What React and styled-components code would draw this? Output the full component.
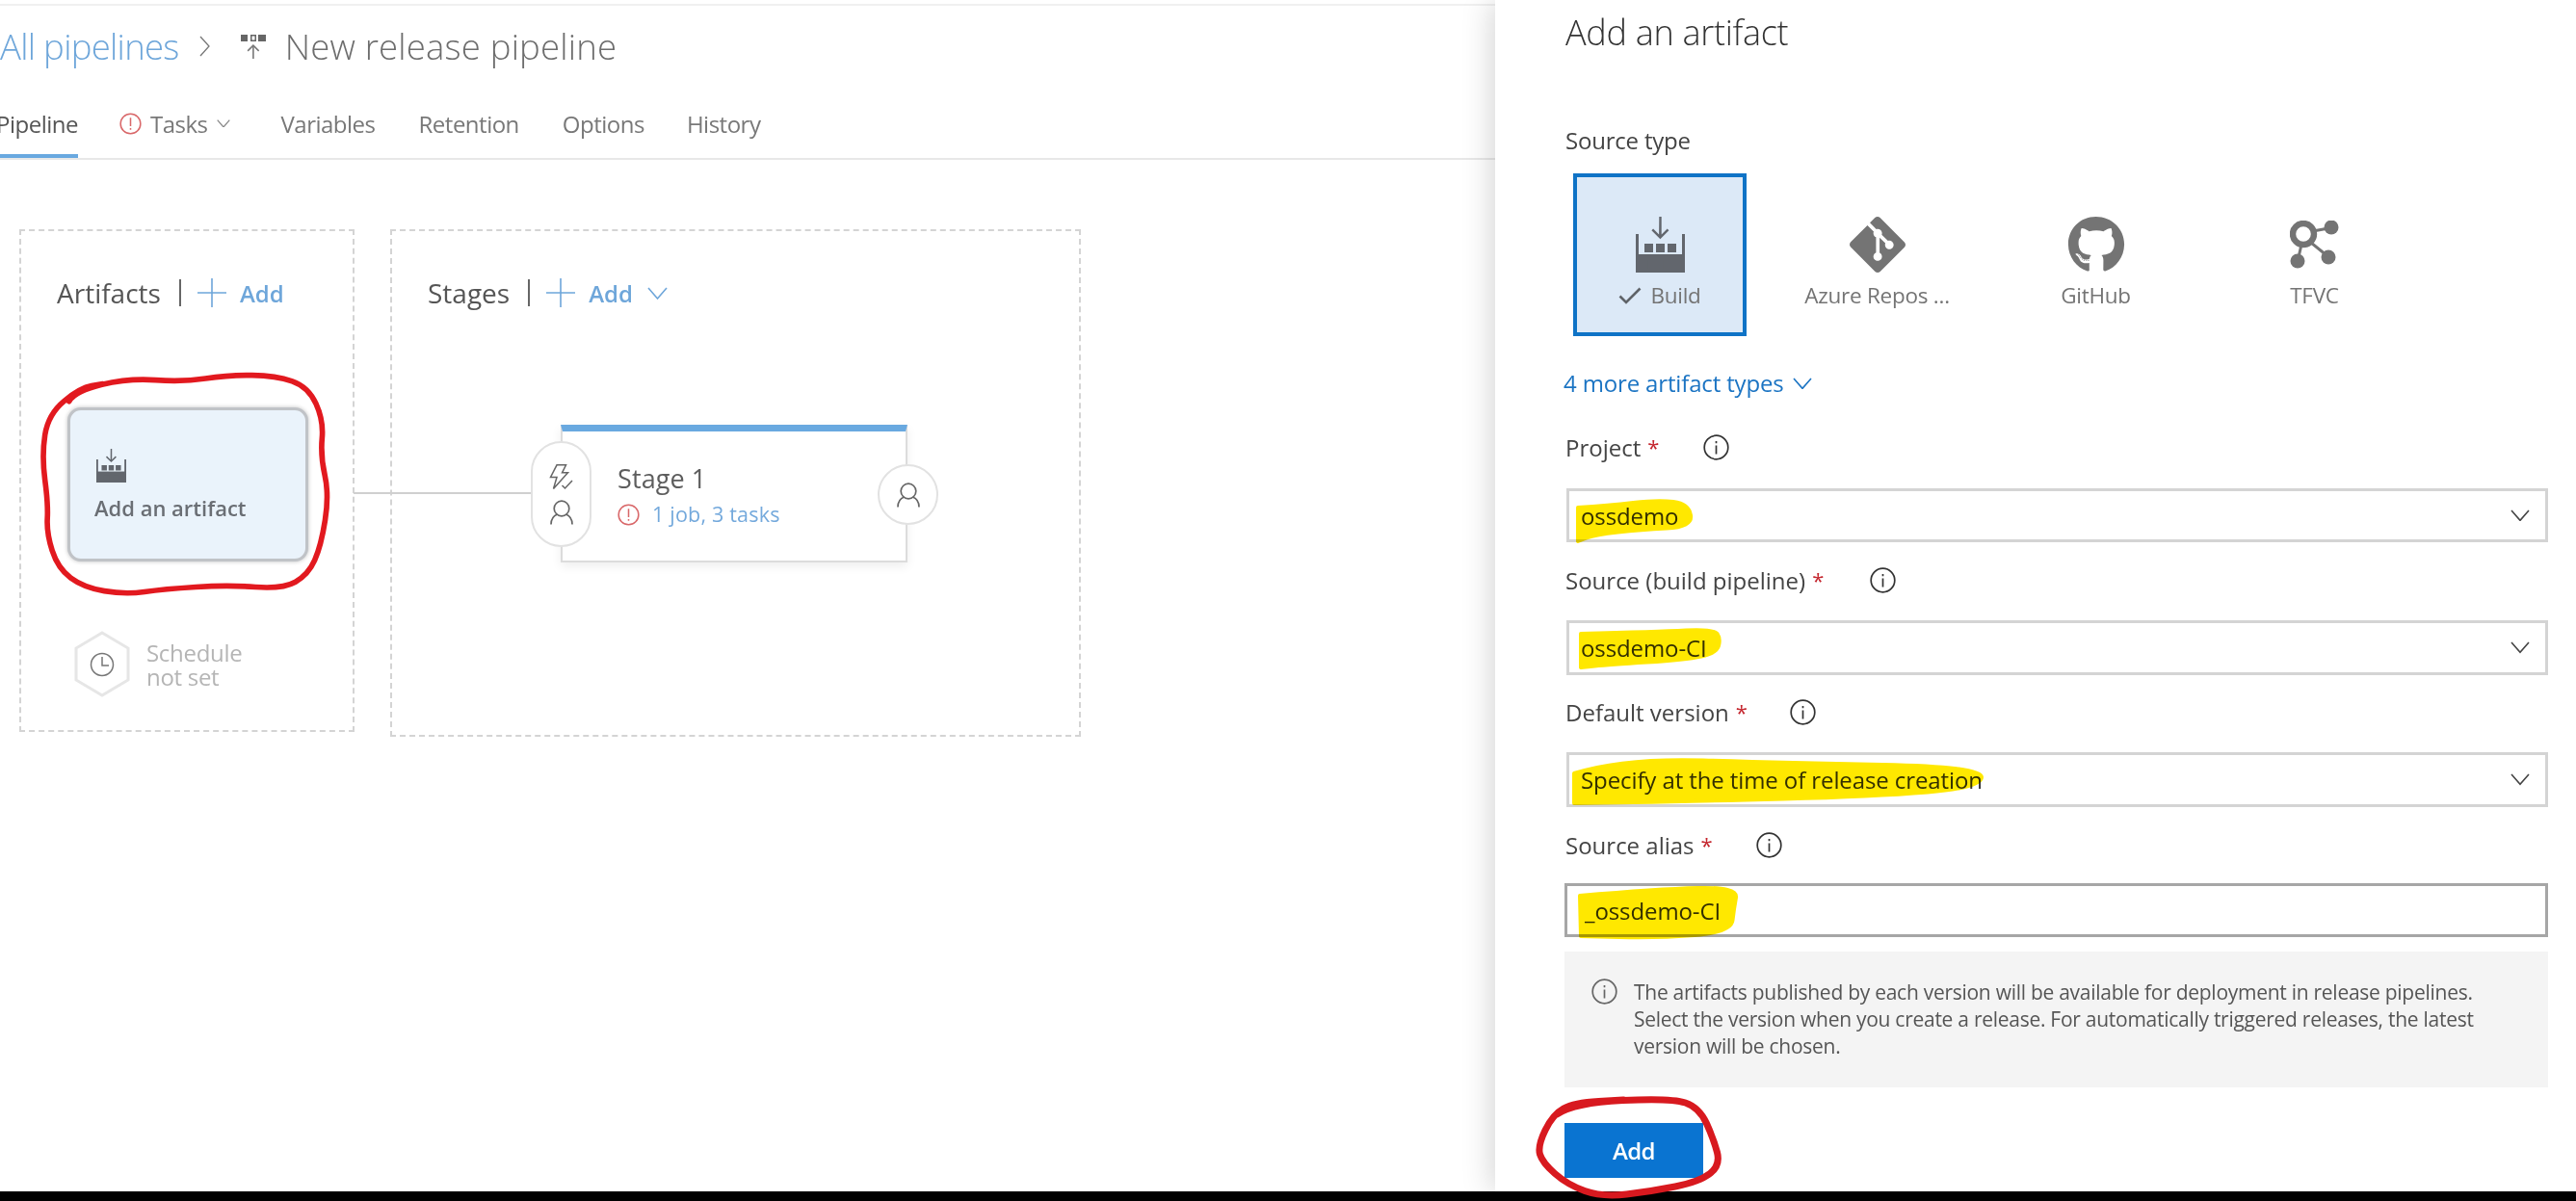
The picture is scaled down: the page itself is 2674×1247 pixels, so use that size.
import React from 'react';
import styled, { createGlobalStyle } from 'styled-components';
import { SiGit } from 'react-icons/si';
import { FaGithub } from 'react-icons/fa';

const GlobalStyle = createGlobalStyle`
  html, body { margin: 0; padding: 0; background: #fff; }
  body { font-family: "Open Sans", "Noto Sans", sans-serif; color: #555; }
  * { box-sizing: border-box; }
`;

// smooth closed/open outline through hand-picked points
function smooth(pts, closed) {
  let d = `M${pts[0][0]} ${pts[0][1]}`;
  for (let i = 1; i < pts.length - 1; i++) {
    const mx = (pts[i][0] + pts[i + 1][0]) / 2;
    const my = (pts[i][1] + pts[i + 1][1]) / 2;
    d += ` Q${pts[i][0]} ${pts[i][1]} ${mx} ${my}`;
  }
  const last = pts[pts.length - 1];
  d += ` L${last[0]} ${last[1]}`;
  return closed ? d + 'Z' : d;
}

const Page = styled.div`
  position: relative;
  width: 2674px;
  height: 1247px;
  overflow: hidden;
  display: flex;
  flex-direction: column;
`;
const Body = styled.div`
  display: flex;
  height: 1237px;
`;
const BlackBar = styled.div`
  height: 10px;
  background: #000;
`;
const Main = styled.main`
  width: 1552px;
  padding-top: 4px;
  overflow: hidden;
`;
const TopRule = styled.div`
  height: 2px;
  background: #f0f0f0;
`;
const TitleRow = styled.div`
  height: 84px;
  display: flex;
  align-items: center;
`;
const Crumb = styled.span`
  font-size: 36.5px;
  font-weight: 300;
  letter-spacing: -0.7px;
  color: #6ea6da;
`;
const PipelineName = styled.span`
  font-size: 36.5px;
  font-weight: 300;
  letter-spacing: 0.2px;
  color: #6d6d6d;
  margin-left: 20px;
`;
const CrumbSep = styled.svg`
  width: 11px;
  height: 22px;
  margin: 0 32px 0 21px;
`;
const Tabs = styled.nav`
  height: 76px;
  display: flex;
  align-items: flex-end;
  border-bottom: 2px solid #e8e8e8;
  margin-left: -4px;
`;
const Tab = styled.div`
  height: 50px;
  padding-bottom: 18px;
  display: flex;
  align-items: center;
  gap: 9px;
  margin-right: ${p => p.$gap}px;
  font-size: 24px;
  letter-spacing: -0.5px;
  color: ${p => (p.$active ? '#555' : '#787878')};
  border-bottom: 4px solid ${p => (p.$active ? '#69a9e0' : 'transparent')};
`;
const Canvas = styled.div`
  display: flex;
  align-items: flex-start;
  gap: 37px;
  padding: 72px 0 0 20px;
`;
const ArtifactsBox = styled.section`
  width: 348px;
  height: 522px;
  border: 2px dashed #d4d4d4;
  padding: 46px 0 0 37px;
`;
const StagesBox = styled.section`
  width: 717px;
  height: 527px;
  border: 2px dashed #d4d4d4;
  padding: 46px 0 0 37px;
`;
const SectionHead = styled.div`
  display: flex;
  align-items: center;
  height: 36px;
`;
const SectionTitle = styled.span`
  font-size: 28px;
  letter-spacing: 0;
  color: #555;
`;
const HeadDivider = styled.span`
  width: 2px;
  height: 28px;
  margin: 0 17px 0 ${p => p.$left}px;
  background: #666;
`;
const AddLink = styled.span`
  margin-left: 14px;
  font-size: 24px;
  font-weight: 600;
  letter-spacing: 0;
  color: #6ea6da;
`;
const HeadChevron = styled.svg`
  width: 21px;
  height: 13px;
  margin-left: 15px;
`;
const ArtifactCard = styled.div`
  width: 250px;
  height: 160px;
  margin: 101px 0 0 11px;
  padding: 40px 0 0 25px;
  background: #eaf3fb;
  border-radius: 14px;
  border: 3px solid #c0c3c7;
  box-shadow: 0 0 4px rgba(0, 0, 0, 0.25);
  display: flex;
  flex-direction: column;
  align-items: flex-start;
`;
const ArtifactIcon = styled.div`
  margin-left: 2px;
  display: flex;
`;
const ArtifactName = styled.span`
  margin-top: 11px;
  font-size: 22px;
  font-weight: 600;
  letter-spacing: 0;
  color: #6a6e74;
`;
const ScheduleRow = styled.div`
  display: flex;
  align-items: center;
  gap: 17px;
  margin: 72px 0 0 18px;
`;
const Hexagon = styled.svg`
  width: 58px;
  height: 69px;
`;
const ScheduleText = styled.span`
  font-size: 24px;
  line-height: 25px;
  letter-spacing: -0.3px;
  color: #b5b5b5;
`;
const StageCard = styled.div`
  position: relative;
  width: 360px;
  height: 143px;
  margin: 119px 0 0 138px;
  background: #fff;
  border: 2px solid #dcdcdc;
  border-top: 7px solid #69a9e0;
  box-shadow: 0 4px 10px rgba(0, 0, 0, 0.07);
  padding: 31px 0 0 57px;
`;
const Connector = styled.div`
  position: absolute;
  left: -217px;
  top: 63px;
  width: 186px;
  height: 2px;
  background: #d0d0d0;
`;
const Pill = styled.div`
  position: absolute;
  left: -33px;
  top: 10px;
  width: 63px;
  height: 110px;
  border-radius: 32px;
  background: #fff;
  border: 2px solid #e2e2e2;
  display: flex;
  flex-direction: column;
  align-items: center;
  justify-content: center;
  gap: 10px;
`;
const ApproverBubble = styled(Pill)`
  left: auto;
  right: -34px;
  top: 34px;
  height: 63px;
`;
const StageName = styled.div`
  font-size: 27px;
  line-height: 36px;
  letter-spacing: 0.1px;
  color: #5d5d5d;
`;
const StageTasks = styled.div`
  display: flex;
  align-items: center;
  gap: 13px;
  margin-top: 4px;
  font-size: 21.5px;
  line-height: 30px;
  letter-spacing: 0.2px;
  color: #74a9dc;
`;
const Panel = styled.aside`
  flex: 1;
  background: #fff;
  box-shadow: -4px 0 30px rgba(0, 0, 0, 0.16);
  padding: 0 29px 0 72px;
`;
const PanelTitle = styled.h2`
  margin: 8px 0 0 1px;
  height: 52px;
  font-size: 36px;
  line-height: 52px;
  font-weight: 300;
  letter-spacing: -0.3px;
  color: #333;
`;
const SourceLabel = styled.div`
  margin: 70px 0 0 1px;
  font-size: 24px;
  line-height: 32px;
  letter-spacing: -0.2px;
  color: #444;
`;
const SourceTypes = styled.div`
  display: flex;
  margin: 18px 0 0 9px;
`;
const SourceTile = styled.div`
  width: ${p => p.$w}px;
  height: 169px;
  padding-top: ${p => (p.$selected ? '41px' : '45px')};
  display: flex;
  flex-direction: column;
  align-items: center;
  border: ${p => (p.$selected ? '4px solid #0f73c6' : 'none')};
  background: ${p => (p.$selected ? '#dce9f7' : 'transparent')};
  color: #747474;
`;
const IconSlot = styled.div`
  height: 58px;
  display: flex;
  align-items: center;
  justify-content: center;
  color: #747474;
`;
const TileLabel = styled.div`
  margin-top: 8px;
  font-size: 22.5px;
  line-height: 32px;
  letter-spacing: -0.25px;
  display: flex;
  align-items: center;
  gap: 9px;
`;
const MoreTypes = styled.div`
  display: flex;
  align-items: center;
  gap: 9px;
  margin: 32px 0 0 -1px;
  font-size: 24px;
  line-height: 34px;
  letter-spacing: -0.15px;
  color: #1b74c3;
`;
const FieldLabel = styled.div`
  display: flex;
  align-items: center;
  height: 32px;
  margin: ${p => p.$top}px 0 0 1px;
  font-size: 24px;
  letter-spacing: 0;
  color: #444;
`;
const Star = styled.span`
  margin-left: 7px;
  font-size: 22px;
  color: #c4262e;
`;
const HelpIcon = styled.svg`
  width: 27px;
  height: 27px;
  margin-left: ${p => p.$left}px;
`;
const SelectBox = styled.div`
  position: relative;
  display: flex;
  align-items: center;
  justify-content: space-between;
  height: ${p => p.$h}px;
  margin: ${p => p.$top}px 0 0 2px;
  padding: 0 16px 0 12px;
  border: 3px solid #d4d4d4;
  font-size: 24px;
  letter-spacing: -0.1px;
  color: #333;
`;
const InputBox = styled(SelectBox)`
  margin-left: 0;
  width: 1021px;
  padding-left: 18px;
  border-color: #a6a6a6;
`;
const Highlight = styled.svg`
  position: absolute;
  left: -3px;
  top: -3px;
  width: 440px;
  height: 60px;
  mix-blend-mode: multiply;
  pointer-events: none;
`;
const Note = styled.div`
  display: flex;
  gap: 17px;
  width: 1021px;
  height: 141px;
  margin-top: 15px;
  padding: 28px 0 0 28px;
  background: #f4f4f4;
  font-size: 21px;
  line-height: 28px;
  letter-spacing: -0.27px;
  color: #555;
`;
const NoteIcon = styled.svg`
  flex: none;
  width: 27px;
  height: 27px;
`;
const AddButton = styled.div`
  width: 144px;
  height: 57px;
  margin-top: 37px;
  display: flex;
  align-items: center;
  justify-content: center;
  background: #0a74d1;
  color: #fff;
  font-size: 24px;
  font-weight: 600;
  letter-spacing: -0.6px;
`;
const Scribble = styled.svg`
  position: absolute;
  left: ${p => p.$x}px;
  top: ${p => p.$y}px;
  width: ${p => p.$w}px;
  height: ${p => p.$h}px;
  pointer-events: none;
`;

const Chevron = ({ size = 20, color = '#555', sw = 1.6 }) => (
  <svg width={size} height={size * 0.62} viewBox="0 0 20 12.4" fill="none" stroke={color} strokeWidth={sw}>
    <path d="M1 1l9 10.4L19 1" />
  </svg>
);

const Alert = ({ size }) => (
  <svg width={size} height={size} viewBox="0 0 24 24" fill="none" stroke="#d9686a" strokeWidth="1.6">
    <circle cx="12" cy="12" r="10.8" />
    <path d="M12 5.5v9M12 16.6v2" />
  </svg>
);

const InfoGlyph = () => (
  <>
    <circle cx="13.5" cy="13.5" r="12.3" fill="none" stroke="currentColor" strokeWidth="1.7" />
    <path d="M13.5 11.5v9M13.5 7v2.2" fill="none" stroke="currentColor" strokeWidth="1.7" />
  </>
);

const Person = ({ color = '#666' }) => (
  <svg width="24" height="26" viewBox="0 0 24 26" fill="none" stroke={color} strokeWidth="1.7">
    <circle cx="12" cy="9" r="7.8" />
    <path d="M1 25.5c0-6.5 4-9.5 6.5-10.5M23 25.5c0-6.5-4-9.5-6.5-10.5" />
  </svg>
);

const BoltCheck = () => (
  <svg width="25" height="27" viewBox="0 0 25 27" fill="none" stroke="#666" strokeWidth="1.5">
    <path d="M8 .8h9.5l-4 8h6L4.5 25.5l3.5-12H1.5z" />
    <path d="M13.5 22l3 3 7.5-8" />
  </svg>
);

const BuildIcon = ({ width, color = '#62666d' }) => (
  <svg width={width} height={(width * 58) / 51} viewBox="0 0 51 58" fill={color}>
    <path d="M24.3 0h2.4v18.5l6-6 1.7 1.7-9 9-9-9 1.7-1.7 6 6z" />
    <path d="M0 18h3v21h45V18h3v40H0z" />
    <path d="M9 28h9v9H9zM21 28h9v9h-9zM33 28h9v9h-9z" />
    <path fillRule="evenodd" d="M0 39h51v19H0zM12.6 45v9H22v-9zM28.5 45v9H38v-9z" />
  </svg>
);

const TfvcIcon = () => (
  <svg width="51" height="50" viewBox="0 0 51 50" fill="#747474" stroke="#747474">
    <circle cx="14" cy="14" r="11" fill="none" strokeWidth="6.4" />
    <circle cx="43" cy="7" r="7.5" stroke="none" />
    <circle cx="8" cy="42" r="7.5" stroke="none" />
    <circle cx="40" cy="38" r="7.5" stroke="none" />
    <path d="M24 11l16-3M12 25L9 38M22 23l16 13" fill="none" strokeWidth="3" />
  </svg>
);

const PipelineIcon = () => (
  <svg width="26" height="25" viewBox="0 0 26 25" fill="#666">
    <path d="M0 0h7v7H0zM18 0h8v7h-8z" />
    <path fillRule="evenodd" d="M10 0h6v7h-6zM11.5 1.5v4h3v-4z" />
    <path d="M12.1 11h1.6v14h-1.6z" fill="#777" />
    <path d="M12.9 10l6.3 6.3-1.1 1.1-5.2-5.2-5.2 5.2-1.1-1.1z" fill="#777" />
  </svg>
);

const BLOBS = {
  project: [[12, 20], [44, 18], [95, 12], [127, 16], [131, 40], [77, 43], [30, 48], [12, 55]],
  source: [[15, 14], [95, 12], [153, 9], [160, 19], [156, 34], [124, 41], [44, 46], [15, 49]],
  version: [[8, 22], [59, 6], [225, 11], [431, 15], [431, 37], [319, 46], [131, 51], [8, 53]],
  alias: [[16, 13], [97, 6], [180, 4], [176, 26], [173, 51], [97, 57], [17, 55]],
};

const ARTIFACT_LOOP = [[155, 110], [175, 78], [340, 38], [510, 50], [650, 28], [800, 30], [900, 65], [948, 170], [938, 280], [965, 400], [940, 560], [900, 650], [820, 695], [650, 682], [450, 695], [330, 712], [200, 690], [120, 630], [85, 520], [90, 430], [70, 280], [90, 150], [190, 68], [260, 56]];
const BUTTON_LOOP = [[26, 27], [44, 15], [145, 10], [174, 20], [189, 53], [196, 80], [174, 97], [124, 107], [73, 113], [37, 100], [11, 77], [6, 60], [22, 27], [44, 15], [95, 12]];

function Mark({ shape }) {
  return (
    <Highlight viewBox="0 0 440 60">
      <path d={smooth(shape, true)} fill="#ffe800" stroke="#ffe800" strokeWidth="4" strokeLinejoin="round" />
    </Highlight>
  );
}

function Field({ label, helpLeft, top, gap, value, shape, boxH }) {
  return (
    <>
      <FieldLabel $top={top}>
        {label}
        <Star>*</Star>
        <HelpIcon $left={helpLeft} viewBox="0 0 27 27" color="#333"><InfoGlyph /></HelpIcon>
      </FieldLabel>
      <SelectBox $h={boxH} $top={gap}>
        <span>{value}</span>
        <Chevron size={20} color="#444" />
        <Mark shape={shape} />
      </SelectBox>
    </>
  );
}

export default function App() {
  return (
    <Page>
      <GlobalStyle />
      <Body>
        <Main>
          <TopRule />
          <TitleRow>
            <Crumb>All pipelines</Crumb>
            <CrumbSep viewBox="0 0 11 22" fill="none" stroke="#777" strokeWidth="1.3"><path d="M1 1l9 10L1 21" /></CrumbSep>
            <PipelineIcon />
            <PipelineName>New release pipeline</PipelineName>
          </TitleRow>
          <Tabs>
            <Tab $active $gap={43}>Pipeline</Tab>
            <Tab $gap={53}><Alert size={23} />Tasks<Chevron size={14} color="#888" sw={1.8} /></Tab>
            <Tab $gap={45}>Variables</Tab>
            <Tab $gap={45}>Retention</Tab>
            <Tab $gap={44}>Options</Tab>
            <Tab $gap={0}>History</Tab>
          </Tabs>
          <Canvas>
            <ArtifactsBox>
              <SectionHead>
                <SectionTitle>Artifacts</SectionTitle>
                <HeadDivider $left={19} />
                <svg width="30" height="30" viewBox="0 0 30 30" stroke="#6ea6da" strokeWidth="1.6"><path d="M15 0v30M0 15h30" /></svg>
                <AddLink>Add</AddLink>
              </SectionHead>
              <ArtifactCard>
                <ArtifactIcon><BuildIcon width={31} /></ArtifactIcon>
                <ArtifactName>Add an artifact</ArtifactName>
              </ArtifactCard>
              <ScheduleRow>
                <Hexagon viewBox="0 0 58 69">
                  <path d="M29 2L56 18v33L29 67 2 51V18z" fill="#fff" stroke="#e6e6e6" strokeWidth="3" />
                  <circle cx="29" cy="35" r="11.5" fill="none" stroke="#777" strokeWidth="1.5" />
                  <path d="M29 27v9h7" fill="none" stroke="#777" strokeWidth="1.5" />
                </Hexagon>
                <ScheduleText>Schedule<br />not set</ScheduleText>
              </ScheduleRow>
            </ArtifactsBox>
            <StagesBox>
              <SectionHead>
                <SectionTitle>Stages</SectionTitle>
                <HeadDivider $left={19} />
                <svg width="30" height="30" viewBox="0 0 30 30" stroke="#6ea6da" strokeWidth="1.6"><path d="M15 0v30M0 15h30" /></svg>
                <AddLink>Add</AddLink>
                <HeadChevron viewBox="0 0 21 13" fill="none" stroke="#6ea6da" strokeWidth="1.6"><path d="M1 1l9.5 11L20 1" /></HeadChevron>
              </SectionHead>
              <StageCard>
                <Connector />
                <Pill>
                  <BoltCheck />
                  <Person />
                </Pill>
                <ApproverBubble>
                  <Person />
                </ApproverBubble>
                <StageName>Stage 1</StageName>
                <StageTasks><Alert size={23} />1 job, 3 tasks</StageTasks>
              </StageCard>
            </StagesBox>
          </Canvas>
        </Main>
        <Panel>
          <PanelTitle>Add an artifact</PanelTitle>
          <SourceLabel>Source type</SourceLabel>
          <SourceTypes>
            <SourceTile $selected $w={180}>
              <IconSlot><BuildIcon width={51} /></IconSlot>
              <TileLabel>
                <svg width="24" height="18" viewBox="0 0 24 18" fill="none" stroke="#5f6368" strokeWidth="2.6"><path d="M1.5 9.5L8 16 22.5 1.5" /></svg>
                Build
              </TileLabel>
            </SourceTile>
            <SourceTile $w={271}>
              <IconSlot><SiGit size={58} /></IconSlot>
              <TileLabel>Azure Repos ...</TileLabel>
            </SourceTile>
            <SourceTile $w={183}>
              <IconSlot><FaGithub size={60} /></IconSlot>
              <TileLabel>GitHub</TileLabel>
            </SourceTile>
            <SourceTile $w={271}>
              <IconSlot><TfvcIcon /></IconSlot>
              <TileLabel>TFVC</TileLabel>
            </SourceTile>
          </SourceTypes>
          <MoreTypes>4 more artifact types <Chevron size={20} color="#1b74c3" /></MoreTypes>
          <Field label="Project" helpLeft={46} top={33} gap={27} value="ossdemo" shape={BLOBS.project} boxH={56} />
          <Field label="Source (build pipeline)" helpLeft={48} top={23} gap={26} value="ossdemo-CI" shape={BLOBS.source} boxH={57} />
          <Field label="Default version" helpLeft={44} top={22} gap={26} value="Specify at the time of release creation" shape={BLOBS.version} boxH={57} />
          <FieldLabel $top={23}>
            Source alias
            <Star>*</Star>
            <HelpIcon $left={45} viewBox="0 0 27 27" color="#333"><InfoGlyph /></HelpIcon>
          </FieldLabel>
          <InputBox $h={56} $top={24}>
            <span>_ossdemo-CI</span>
            <Mark shape={BLOBS.alias} />
          </InputBox>
          <Note>
            <NoteIcon viewBox="0 0 27 27" color="#666"><InfoGlyph /></NoteIcon>
            <span>The artifacts published by each version will be available for deployment in release pipelines.<br />Select the version when you create a release. For automatically triggered releases, the latest<br />version will be chosen.</span>
          </Note>
          <AddButton>Add</AddButton>
        </Panel>
      </Body>
      <BlackBar />
      <Scribble $x={20} $y={380} $w={340} $h={260} viewBox="0 0 1020 780">
        <path d={smooth(ARTIFACT_LOOP)} fill="none" stroke="#e2191f" strokeWidth="17" strokeLinecap="round" />
      </Scribble>
      <Scribble $x={1590} $y={1130} $w={200} $h={117} viewBox="0 0 200 117">
        <path d={smooth(BUTTON_LOOP)} fill="none" stroke="#d8191f" strokeWidth="7" strokeLinecap="round" />
      </Scribble>
    </Page>
  );
}
